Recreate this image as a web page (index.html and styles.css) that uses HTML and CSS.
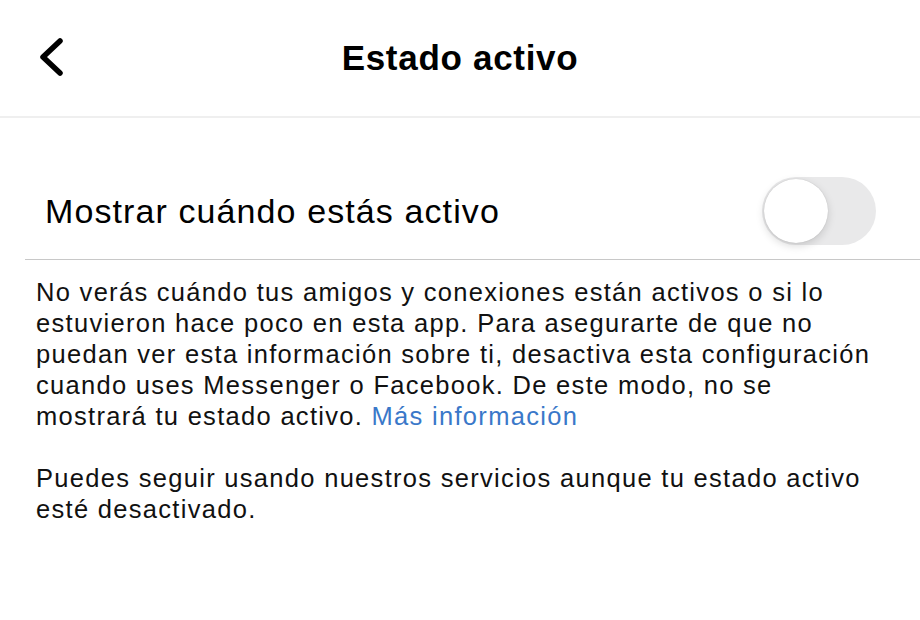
FILE: index.html
```html
<!DOCTYPE html>
<html lang="es">
<head>
  <meta charset="UTF-8">
  <meta name="viewport" content="width=device-width, initial-scale=1.0">
  <title>Estado activo</title>
  <link rel="stylesheet" href="styles.css">
</head>
<body>
  <header class="topbar">
    <button class="back" aria-label="Atrás">
      <svg width="30" height="38" viewBox="0 0 30 38">
        <path d="M24 3 L7 19 L24 35" fill="none" stroke="#000" stroke-width="5.5" stroke-linecap="round" stroke-linejoin="round"/>
      </svg>
    </button>
    <h1>Estado activo</h1>
  </header>

  <section class="settings">
    <div class="row">
      <span class="row-label">Mostrar cuándo estás activo</span>
      <span class="toggle"><span class="knob"></span></span>
    </div>
  </section>

  <div class="info">
    <p>No verás cuándo tus amigos y conexiones están activos o si lo estuvieron hace poco en esta app. Para asegurarte de que no puedan ver esta información sobre ti, desactiva esta configuración cuando uses Messenger o Facebook. De este modo, no se mostrará tu estado activo. <a href="#">Más información</a></p>
    <p>Puedes seguir usando nuestros servicios aunque tu estado activo esté desactivado.</p>
  </div>
</body>
</html>
```

FILE: styles.css
```css
body {
  margin: 0;
  font-family: "Liberation Sans", Arial, sans-serif;
  color: #111;
  background-color: #fff;
}
.topbar {
  position: relative;
  height: 116px;
  display: flex;
  align-items: center;
  justify-content: center;
  border-bottom: 2px solid #efefef;
}
.topbar h1 {
  margin: 0;
  font-size: 35px;
  font-weight: bold;
  letter-spacing: 0.7px;
  color: #000;
}
.back {
  position: absolute;
  left: 36px;
  top: 38px;
  padding: 0;
  border: none;
  background: none;
}
.back svg {
  display: block;
}
.settings {
  margin-top: 45px;
}
.row {
  display: flex;
  align-items: center;
  justify-content: space-between;
  margin-left: 25px;
  padding: 14px 44px 14px 20px;
  border-bottom: 1px solid #c8c8c8;
}
.row-label {
  font-size: 34px;
  letter-spacing: 1.1px;
  color: #000;
}
.toggle {
  width: 114px;
  height: 68px;
  border-radius: 34px;
  background-color: #e9e9ea;
  display: flex;
  align-items: center;
  padding: 0 2px;
  box-sizing: border-box;
}
.knob {
  width: 64px;
  height: 64px;
  border-radius: 50%;
  background-color: #fff;
  box-shadow: 0 3px 8px rgba(0, 0, 0, 0.15), 0 0 1px rgba(0, 0, 0, 0.2);
}
.info {
  padding: 17px 36px 0 36px;
}
.info p {
  margin: 0 0 31px 0;
  font-size: 25.5px;
  line-height: 31px;
  letter-spacing: 1.3px;
  color: #111;
}
.info a {
  color: #3a78c9;
  text-decoration: none;
}
```
